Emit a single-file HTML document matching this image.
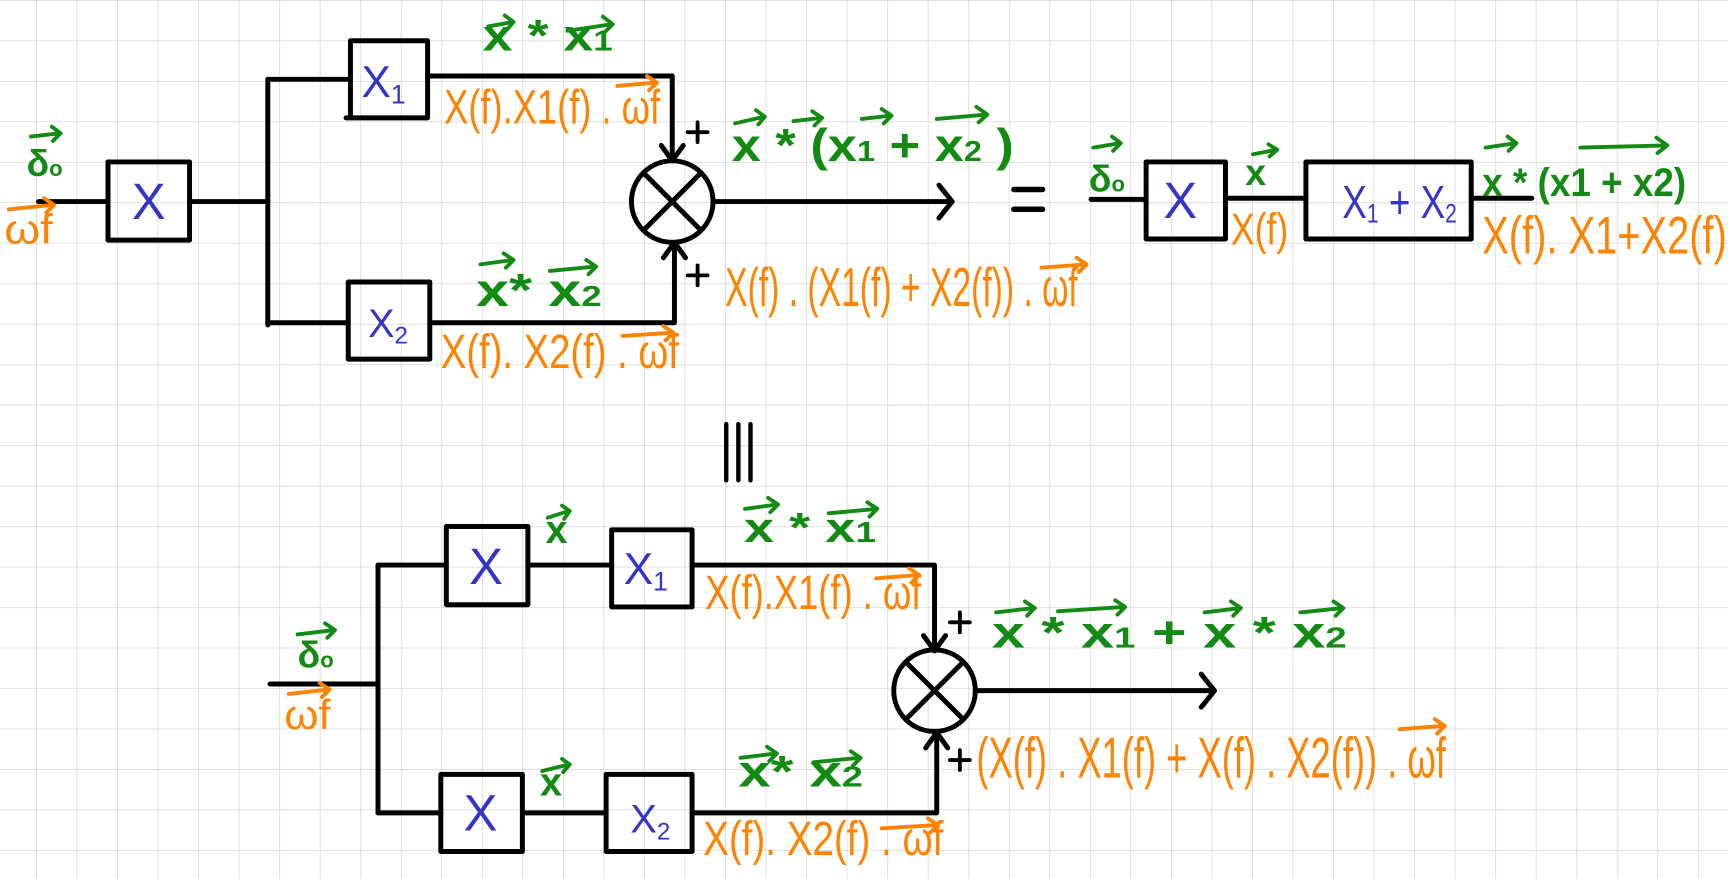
<!DOCTYPE html>
<html><head><meta charset="utf-8"><style>
html,body{margin:0;padding:0;background:#fff;overflow:hidden}
svg{display:block}
text{font-family:"Liberation Sans Narrow","Liberation Sans",sans-serif;}
.g{fill:#138a13}.o{fill:#ff8200}.b{fill:#3434c8}
.w{stroke:#000;stroke-width:4.5;fill:none;stroke-linecap:round;stroke-linejoin:round}
.ag{stroke:#138a13;stroke-width:3.5;fill:none;stroke-linecap:round;stroke-linejoin:round}
.ao{stroke:#ff8200;stroke-width:3.5;fill:none;stroke-linecap:round;stroke-linejoin:round}
</style></head><body>
<svg width="1728" height="879" viewBox="0 0 1568 798" preserveAspectRatio="none" xmlns="http://www.w3.org/2000/svg">
<defs>
<pattern id="gr" x="32.7" y="0" width="36.78" height="36.75" patternUnits="userSpaceOnUse">
<path d="M0 0V36.75M0 0H36.78" stroke="#cfcfcf" stroke-width="1.2" fill="none"/>
</pattern>
</defs>
<rect width="1568" height="798" fill="#fff"/>
<rect width="1568" height="798" fill="url(#gr)"/>

<g class="w">
<path d="M35 183H98"/><rect x="98" y="147" width="74" height="71"/><path d="M172 183H243M243 72V295"/>
<path d="M243 72H318"/><path d="M318 37V107M318 37H388V107M314 107H388"/>
<path d="M388 69H610V145"/><path d="M600 132L610 146L620 132"/>
<ellipse cx="610" cy="183" rx="37" ry="37"/><path d="M584 157L636 209M636 157L584 209"/>
<path d="M243 293H316"/><path d="M316 256H390V326H316Z"/>
<path d="M390 293H612V221"/><path d="M602 234L612 220L622 234"/>
<path d="M648 183H862"/><path d="M852 168L864 183L852 198"/>
<path d="M920 172H946M920 190H946" style="stroke-width:5"/>
<path d="M624 120H642M633 111V129M624 250H642M633 241V259" style="stroke-width:3.5"/>
<path d="M990 181H1040"/><rect x="1040" y="147" width="72" height="70"/><path d="M1112 180H1185"/>
<rect x="1185" y="147" width="150" height="70"/><path d="M1335 180H1390"/>
<path d="M659 385V436M670 385V436M681 385V436" style="stroke-width:4"/>
<path d="M245 621H343M343 513V738"/>
<path d="M343 513H405"/><rect x="405" y="478" width="74" height="71"/><path d="M479 513H555"/>
<rect x="555" y="481" width="73" height="70"/>
<path d="M628 513H848V590"/><path d="M838 577L848 591L858 577"/>
<ellipse cx="848" cy="627" rx="37" ry="37"/><path d="M822 601L874 653M874 601L822 653"/>
<path d="M885 627H1100"/><path d="M1090 612L1102 627L1090 642"/>
<path d="M343 738H400"/><rect x="400" y="703" width="74" height="70"/><path d="M474 738H550"/>
<rect x="550" y="703" width="78" height="70"/>
<path d="M628 738H850V666"/><path d="M840 679L850 665L860 679"/>
<path d="M862 565H880M871 556V574M862 690H880M871 681V699" style="stroke-width:3.5"/>
</g>

<text class="b" x="135" y="199" font-size="46" text-anchor="middle">X</text>
<text class="b" x="328" y="88" font-size="40">X<tspan font-size="24" dy="6">1</tspan></text>
<text class="b" x="334" y="306" font-size="36">X<tspan font-size="22" dy="6">2</tspan></text>
<text class="b" x="1071" y="198" font-size="46" text-anchor="middle">X</text>
<text class="b" x="1218" y="198" font-size="42" textLength="104" lengthAdjust="spacingAndGlyphs">X<tspan font-size="24" dy="4">1</tspan><tspan dy="-4"> + X</tspan><tspan font-size="24" dy="4">2</tspan></text>
<text class="b" x="441" y="530" font-size="46" text-anchor="middle">X</text>
<text class="b" x="566" y="530" font-size="40">X<tspan font-size="24" dy="6">1</tspan></text>
<text class="b" x="436" y="754" font-size="46" text-anchor="middle">X</text>
<text class="b" x="572" y="756" font-size="36">X<tspan font-size="22" dy="6">2</tspan></text>

<g class="g" font-weight="bold">
<text x="24" y="160" font-size="34">δ<tspan font-size="20">o</tspan></text>
<text x="438" y="46" font-size="40" textLength="118" lengthAdjust="spacingAndGlyphs">x  *  x<tspan font-size="26">1</tspan></text>
<text x="664" y="146" font-size="42" textLength="256" lengthAdjust="spacingAndGlyphs">x  * (x<tspan font-size="26">1</tspan> + x<tspan font-size="26">2</tspan> )</text>
<text x="432" y="278" font-size="42" textLength="114" lengthAdjust="spacingAndGlyphs">x*  x<tspan font-size="26">2</tspan></text>
<text x="988" y="174" font-size="34">δ<tspan font-size="20">o</tspan></text>
<text x="1130" y="168" font-size="34">x</text>
<text x="1345" y="178" font-size="36" textLength="185" lengthAdjust="spacingAndGlyphs">x * (x1 + x2)</text>
<text x="270" y="606" font-size="34">δ<tspan font-size="20">o</tspan></text>
<text x="495" y="493" font-size="36">x</text>
<text x="675" y="492" font-size="38" textLength="120" lengthAdjust="spacingAndGlyphs">x  *  x<tspan font-size="26">1</tspan></text>
<text x="900" y="588" font-size="40" textLength="322" lengthAdjust="spacingAndGlyphs">x  * x<tspan font-size="26">1</tspan>  +  x  * x<tspan font-size="26">2</tspan></text>
<text x="490" y="722" font-size="36">x</text>
<text x="670" y="714" font-size="40" textLength="113" lengthAdjust="spacingAndGlyphs">x*  x<tspan font-size="26">2</tspan></text>
</g>
<g class="ag">
<path d="M28 124L54 121M47 115L55 121L48 128"/>
<path d="M443 24L465 20M458 14L466 20L460 27M515 28L555 22M547 15L556 22L549 29"/>
<path d="M667 112L693 106M686 100L694 106L688 113M720 110L745 107M737 101L746 107L739 114M782 108L808 105M800 99L809 105L802 112M850 108L895 104M886 97L896 104L888 111"/>
<path d="M436 240L465 236M457 230L466 236L459 243M499 246L540 242M532 236L541 242L534 249"/>
<path d="M992 134L1016 130M1009 124L1017 130L1010 137M1137 140L1158 136M1151 131L1159 136L1152 142M1348 134L1375 130M1368 124L1376 130L1369 137M1434 134L1512 132M1503 125L1513 132L1504 139"/>
<path d="M270 576L303 572M295 566L304 572L297 579M497 470L516 464M510 459L517 464L512 471M676 462L705 458M697 452L706 458L699 465M752 466L795 462M787 456L796 462L789 469"/>
<path d="M904 556L938 552M930 546L939 552L932 559M960 555L1020 551M1012 545L1021 551L1014 558M1093 556L1125 552M1117 546L1126 552L1119 559M1180 556L1218 552M1210 546L1219 552L1212 559"/>
<path d="M492 700L516 694M510 689L517 694L511 701M672 688L704 684M696 678L705 684L698 691M738 692L780 688M772 682L781 688L774 695"/>
</g>

<g class="o">
<text x="4" y="221" font-size="38" textLength="44" lengthAdjust="spacingAndGlyphs">ωf</text>
<text x="403" y="112" font-size="44" textLength="196" lengthAdjust="spacingAndGlyphs">X(f).X1(f) . ωf</text>
<text x="658" y="278" font-size="50" textLength="320" lengthAdjust="spacingAndGlyphs">X(f) . (X1(f) + X2(f)) . ωf</text>
<text x="400" y="334" font-size="44" textLength="216" lengthAdjust="spacingAndGlyphs">X(f). X2(f)   . ωf</text>
<text x="1117" y="222" font-size="40" textLength="52" lengthAdjust="spacingAndGlyphs">X(f)</text>
<text x="1345" y="230" font-size="48" textLength="222" lengthAdjust="spacingAndGlyphs">X(f).  X1+X2(f)</text>
<text x="258" y="662" font-size="38" textLength="42" lengthAdjust="spacingAndGlyphs">ωf</text>
<text x="640" y="553" font-size="44" textLength="196" lengthAdjust="spacingAndGlyphs">X(f).X1(f) . ωf</text>
<text x="886" y="706" font-size="52" textLength="426" lengthAdjust="spacingAndGlyphs">(X(f) . X1(f) + X(f) . X2(f)) . ωf</text>
<text x="638" y="776" font-size="44" textLength="218" lengthAdjust="spacingAndGlyphs">X(f). X2(f)   . ωf</text>
</g>
<g class="ao">
<path d="M8 190L48 186M40 180L49 186L42 193"/>
<path d="M560 78L595 75M587 69L596 75L589 82M945 243L985 240M977 234L986 240L979 247M565 305L610 302M602 296L611 302L604 309"/>
<path d="M262 630L298 626M290 620L299 626L292 633M795 525L833 522M825 516L834 522L827 529M1270 662L1310 659M1302 653L1311 659L1304 666M800 752L850 749M842 743L851 749L844 756"/>
</g>
</svg>
</body></html>
